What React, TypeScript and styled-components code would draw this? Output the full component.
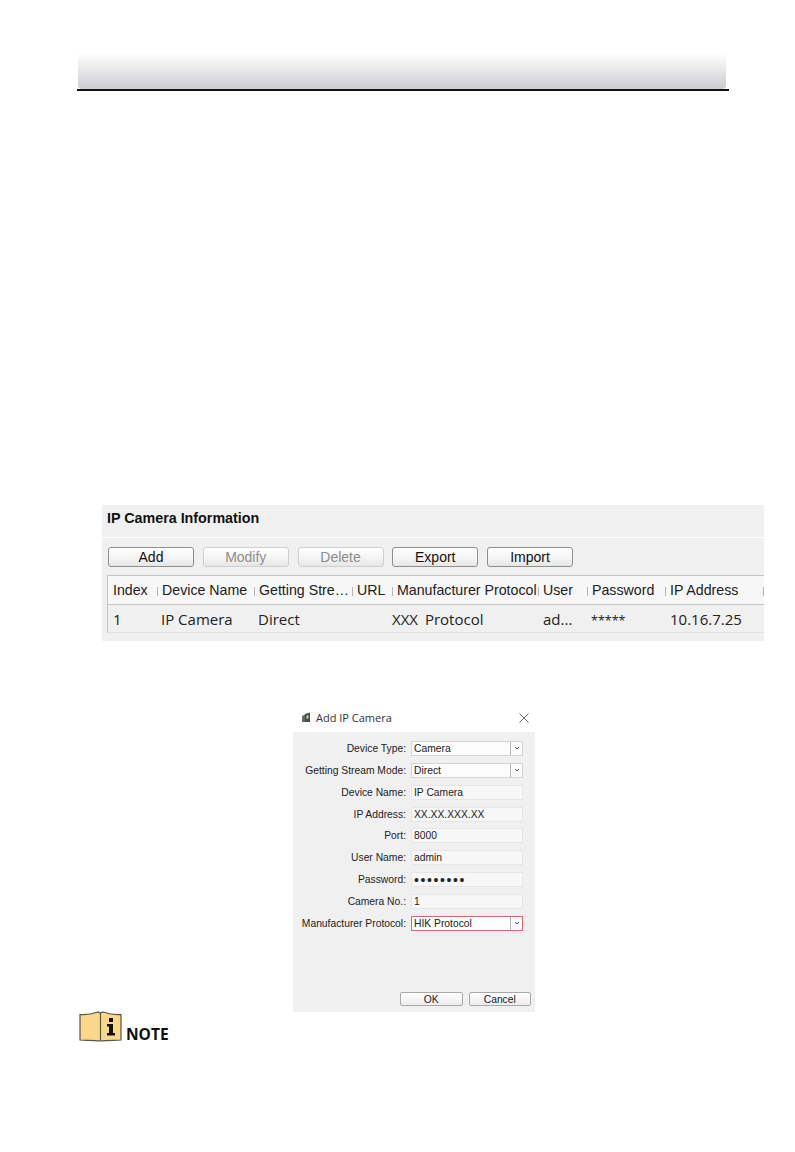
import React from 'react';
import styled, { createGlobalStyle } from 'styled-components';

const GlobalStyle = createGlobalStyle`
  html, body {
    margin: 0;
    padding: 0;
    background: #ffffff;
  }
  body {
    font-family: "Liberation Sans", Arial, sans-serif;
  }
`;

/*
Page
  Header
  CameraPanel
    PanelTitle / Toolbar / Table
  DialogWrap
    Dialog
  NoteRow
*/

const Page = styled.div`
  width: 795px;
  height: 1152px;
  overflow: hidden;
  padding-top: 52px;
  box-sizing: border-box;
`;

const Header = styled.header`
  margin: 0 66px 0 77px;
  padding: 0 3px 0 1px;
  border-bottom: 2px solid #111;
`;

const HeaderBand = styled.div`
  height: 37px;
  border-radius: 0 0 4px 4px;
  background: linear-gradient(#ffffff, #f1f1f2 30%, #dcdcde 70%, #cdcdcf);
`;

const CameraPanel = styled.section`
  margin: 414px 31px 0 102px;
  height: 136px;
  background: #f0f0f0;
  display: flex;
  flex-direction: column;
`;

const PanelTitle = styled.div`
  height: 26px;
  padding: 0 5px 6px;
  display: flex;
  align-items: center;
  font-size: 14.3px;
  font-weight: bold;
  color: #111;
  border-bottom: 1px solid #fff;
`;

const Toolbar = styled.div`
  display: flex;
  gap: 8.75px;
  padding: 9px 0 0 6px;
  height: 28px;
`;

const ToolButton = styled.button<{ $off?: boolean }>`
  width: 86px;
  height: 20px;
  padding: 0;
  font: 14px "Liberation Sans", Arial, sans-serif;
  color: ${(p) => (p.$off ? '#8d8d8d' : '#111')};
  background: linear-gradient(#ffffff, #f3f3f3 60%, #e6e6e6);
  border: 1px solid ${(p) => (p.$off ? '#cfcfcf' : '#8f8f8f')};
  border-radius: 3px;
`;

const Table = styled.div`
  margin-left: 5px;
  border-left: 1px solid #c4c4c4;
  border-top: 1px solid #c4c4c4;
`;

const HeadRow = styled.div`
  display: flex;
  height: 28px;
  align-items: center;
  background: #f7f7f7;
  border-bottom: 1px solid #c4c4c4;
  font-size: 14.2px;
  color: #222;
`;

const HeadCell = styled.div<{ $w: number }>`
  width: ${(p) => p.$w}px;
  flex: none;
  box-sizing: border-box;
  padding-left: 5px;
  white-space: nowrap;
  position: relative;
  &::after {
    content: '';
    position: absolute;
    right: -1px;
    top: 5px;
    height: 9px;
    width: 1px;
    background: #b5b5b5;
  }
`;

const BodyRow = styled.div`
  display: flex;
  height: 27px;
  align-items: center;
  border-bottom: 1px solid #e2e2e2;
  font-family: "Open Sans", "Noto Sans", sans-serif;
  font-size: 15px;
  color: #222;
`;

const BodyCell = styled.div<{ $w: number }>`
  width: ${(p) => p.$w}px;
  flex: none;
  box-sizing: border-box;
  padding-left: 5px;
  white-space: nowrap;
`;

const ProtoCode = styled.span`
  margin-right: 3px;
`;

const Stars = styled.span`
  font-size: 12.5px;
`;

const DialogWrap = styled.div`
  display: flex;
  justify-content: flex-start;
  margin: 65px 0 0 293px;
`;

const Dialog = styled.section`
  width: 242px;
`;

const DialogTitle = styled.div`
  height: 23px;
  padding: 0 6px 3px 8px;
  display: flex;
  align-items: center;
  justify-content: space-between;
  font-family: "Open Sans", "Noto Sans", sans-serif;
  font-size: 11px;
  color: #333;
`;

const TitleLeft = styled.div`
  display: flex;
  align-items: center;
  gap: 4px;
`;

const DialogBody = styled.div`
  background: #f0f0f0;
  height: 280px;
  padding: 5.5px 12px 0 0;
  box-sizing: border-box;
  display: flex;
  flex-direction: column;
`;

const FieldRow = styled.div`
  display: flex;
  align-items: center;
  justify-content: flex-end;
  height: 21.875px;
  font-size: 10.3px;
  color: #222;
`;

const FieldLabel = styled.div`
  margin-right: 5px;
  white-space: nowrap;
`;

const FieldBox = styled.div<{ $hot?: boolean; $select?: boolean }>`
  width: 112px;
  height: 15px;
  box-sizing: border-box;
  display: flex;
  align-items: center;
  padding-left: 2px;
  background: ${(p) => (p.$select ? '#fcfcfc' : '#f7f7f7')};
  border: 1px solid ${(p) => (p.$hot ? '#d9686c' : p.$select ? '#d4d4d4' : '#e6e6e6')};
  white-space: nowrap;
  position: relative;
`;

const Dots = styled.span`
  font-size: 14px;
  line-height: 1;
  letter-spacing: 1.6px;
`;

const SelectArrow = styled.span`
  position: absolute;
  right: 0;
  top: 0;
  bottom: 0;
  width: 11px;
  border-left: 1px solid #b5b5b5;
  display: flex;
  align-items: center;
  justify-content: center;
`;

const DialogActions = styled.div`
  margin-top: auto;
  display: flex;
  justify-content: flex-end;
  gap: 6px;
  padding-bottom: 6px;
  margin-right: -8px;
`;

const DialogButton = styled.button`
  width: 62.5px;
  height: 14px;
  padding: 0;
  font: 10.3px "Liberation Sans", Arial, sans-serif;
  color: #222;
  background: linear-gradient(#ffffff, #ececec);
  border: 1px solid #a9a9a9;
  border-radius: 2px;
`;

const NoteRow = styled.div`
  display: flex;
  align-items: flex-end;
  gap: 4px;
  margin: -1px 0 0 79px;
`;

const NoteText = styled.span`
  font-family: "Open Sans", "Noto Sans", sans-serif;
  font-size: 15.5px;
  font-weight: bold;
  color: #111;
  line-height: 18px;
  margin-bottom: -1px;
`;

const headColumns = [
  { head: 'Index', w: 49 },
  { head: 'Device Name', w: 97 },
  { head: 'Getting Stre…', w: 98 },
  { head: 'URL', w: 40 },
  { head: 'Manufacturer Protocol', w: 146 },
  { head: 'User', w: 49 },
  { head: 'Password', w: 78 },
  { head: 'IP Address', w: 98 },
];

const bodyCells = [
  { w: 48, value: '1' },
  { w: 97, value: 'IP Camera' },
  { w: 134, value: 'Direct' },
  { w: 151, value: <><ProtoCode>XXX</ProtoCode> Protocol</> },
  { w: 48, value: 'ad...' },
  { w: 79, value: <Stars>*****</Stars> },
  { w: 98, value: '10.16.7.25' },
];

const fields = [
  { label: 'Device Type:', value: 'Camera', select: true },
  { label: 'Getting Stream Mode:', value: 'Direct', select: true },
  { label: 'Device Name:', value: 'IP Camera' },
  { label: 'IP Address:', value: 'XX.XX.XXX.XX' },
  { label: 'Port:', value: '8000' },
  { label: 'User Name:', value: 'admin' },
  { label: 'Password:', value: <Dots>••••••••</Dots> },
  { label: 'Camera No.:', value: '1' },
  { label: 'Manufacturer Protocol:', value: 'HIK Protocol', select: true, hot: true },
];

const Chevron = () => (
  <svg width="6" height="4" viewBox="0 0 6 4">
    <path d="M1 1l2 2 2-2" fill="none" stroke="#555" strokeWidth="1" />
  </svg>
);

const NoteIcon = () => (
  <svg width="43" height="31" viewBox="0 0 43 31">
    <path
      d="M1 3.5 C7 4 13 3 19 1 L21.5 2 L24 1 C30 3 36 4 42 3.5 V29 C36 29.5 28 29 21.5 30 C15 29 7 29.5 1 29Z"
      fill="#fbd78a"
      stroke="#5a5348"
      strokeWidth="1.2"
    />
    <path d="M21.5 2V30" stroke="#5a5348" strokeWidth="1.2" />
    <rect x="30" y="7" width="4" height="4" fill="#111" />
    <path d="M28 13h6v9h2v2.5h-8V22h2v-6.500h-2z" fill="#111" />
  </svg>
);

const App = () => {
  return (
    <>
      <GlobalStyle />
      <Page>
        <Header>
          <HeaderBand />
        </Header>
        <CameraPanel>
          <PanelTitle>IP Camera Information</PanelTitle>
          <Toolbar>
            <ToolButton>Add</ToolButton>
            <ToolButton $off>Modify</ToolButton>
            <ToolButton $off>Delete</ToolButton>
            <ToolButton>Export</ToolButton>
            <ToolButton>Import</ToolButton>
          </Toolbar>
          <Table>
            <HeadRow>
              {headColumns.map((c) => (
                <HeadCell key={c.head} $w={c.w}>{c.head}</HeadCell>
              ))}
            </HeadRow>
            <BodyRow>
              {bodyCells.map((c, i) => (
                <BodyCell key={i} $w={c.w}>{c.value}</BodyCell>
              ))}
            </BodyRow>
          </Table>
        </CameraPanel>
        <DialogWrap>
          <Dialog>
            <DialogTitle>
              <TitleLeft>
                <svg width="11" height="11" viewBox="0 0 11 11">
                  <path d="M1 4l3-1.500V10H1z" fill="#6b6b6b" />
                  <path d="M4 2l5-1.500V10H4z" fill="#4c4c4c" />
                  <path d="M5.500 3.500h2v3h-2z" fill="#c9d6c4" />
                </svg>
                Add IP Camera
              </TitleLeft>
              <svg width="10" height="10" viewBox="0 0 10 10">
                <path d="M0.500 0.500l9 9M9.500 0.500l-9 9" stroke="#444" strokeWidth="0.8" />
              </svg>
            </DialogTitle>
            <DialogBody>
              {fields.map((f) => (
                <FieldRow key={f.label}>
                  <FieldLabel>{f.label}</FieldLabel>
                  <FieldBox $hot={f.hot} $select={f.select}>
                    {f.value}
                    {f.select && (
                      <SelectArrow>
                        <Chevron />
                      </SelectArrow>
                    )}
                  </FieldBox>
                </FieldRow>
              ))}
              <DialogActions>
                <DialogButton>OK</DialogButton>
                <DialogButton>Cancel</DialogButton>
              </DialogActions>
            </DialogBody>
          </Dialog>
        </DialogWrap>
        <NoteRow>
          <NoteIcon />
          <NoteText>NOTE</NoteText>
        </NoteRow>
      </Page>
    </>
  );
};

export default App;
